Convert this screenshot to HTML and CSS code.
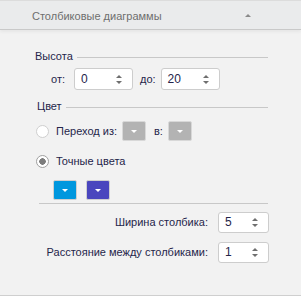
FILE: index.html
```html
<!DOCTYPE html>
<html lang="ru">
<head>
  <meta charset="UTF-8" />
  <title>Столбиковые диаграммы</title>
  <link rel="stylesheet" href="styles.css">
</head>
<body>
  <div class="panel">
    <!-- Header -->
    <div class="panel-header">
      <span class="panel-title">Столбиковые диаграммы</span>
      <span class="collapse-arrow"></span>
    </div>
    <div class="panel-body">
      <!-- Height -->
      <div class="group-title"><span>Высота</span><div class="group-line"></div></div>
      <div class="range-row">
        <span class="label">от:</span>
        <div class="spin"><span class="spin-value">0</span><span class="spin-arrows"><i class="up"></i><i class="down"></i></span></div>
        <span class="label">до:</span>
        <div class="spin"><span class="spin-value">20</span><span class="spin-arrows"><i class="up"></i><i class="down"></i></span></div>
      </div>
      <!-- Color -->
      <div class="group-title color-title"><span>Цвет</span><div class="group-line"></div></div>
      <div class="radio-row">
        <span class="radio"></span>
        <span class="label">Переход из:</span>
        <span class="color-btn gray"><i></i></span>
        <span class="label to">в:</span>
        <span class="color-btn gray"><i></i></span>
      </div>
      <div class="radio-row second">
        <span class="radio checked"></span>
        <span class="label">Точные цвета</span>
      </div>
      <div class="color-row">
        <span class="color-btn blue"><i></i></span>
        <span class="color-btn purple"><i></i></span>
      </div>
      <div class="separator"></div>
      <!-- Bar settings -->
      <div class="field-row">
        <span class="label">Ширина столбика:</span>
        <div class="spin small"><span class="spin-value">5</span><span class="spin-arrows"><i class="up"></i><i class="down"></i></span></div>
      </div>
      <div class="field-row">
        <span class="label">Расстояние между столбиками:</span>
        <div class="spin small"><span class="spin-value">1</span><span class="spin-arrows"><i class="up"></i><i class="down"></i></span></div>
      </div>
    </div>
  </div>
</body>
</html>
```
FILE: styles.css
```css
/* Global */
html, body {
  margin: 0;
  padding: 0;
  width: 301px;
  height: 296px;
  overflow: hidden;
  background: #f2f2f2;
  font-family: 'Liberation Sans', Arial, sans-serif;
  font-size: 11px;
  color: #25254a;
  white-space: nowrap;
}
.panel {
  height: 295px;
  border-bottom: 1px solid #cfcfcf;
}
/* Header */
.panel-header {
  height: 28px;
  background: #eaebec;
  border-top: 1px solid #dcdcdc;
  border-bottom: 1px solid #c9c9c9;
  box-shadow: 0 2px 3px rgba(0,0,0,0.05);
  display: flex;
  align-items: center;
  justify-content: space-between;
  padding: 0 50px 0 32px;
}
.panel-title {
  color: #6e6e6e;
  padding-top: 2px;
}
.collapse-arrow {
  width: 0;
  height: 0;
  border-left: 3px solid transparent;
  border-right: 3px solid transparent;
  border-bottom: 3px solid #8a8a8a;
}
/* Body */
.panel-body {
  padding: 19px 33px 0 35px;
}
.group-title {
  display: flex;
  align-items: center;
  height: 14px;
}
.group-line {
  flex: 1;
  height: 1px;
  background: #c8c8c8;
  margin-left: 4px;
  margin-top: 2px;
}
.color-title {
  margin-top: 9px;
  padding-left: 2px;
}
.range-row {
  display: flex;
  align-items: center;
  margin-top: 5px;
  padding-left: 16px;
  height: 22px;
}
.range-row .label {
  margin-right: 9px;
}
.range-row .spin + .label {
  margin-left: 7px;
  margin-right: 5px;
}
/* Spin box */
.spin {
  width: 59px;
  height: 22px;
  background: #fff;
  border: 1px solid #cdcdcd;
  border-radius: 3px;
  display: flex;
  align-items: center;
  justify-content: space-between;
  padding: 0 10px 0 6px;
  box-sizing: border-box;
  font-size: 12px;
}
.spin.small {
  width: 51px;
  height: 21px;
}
.spin-arrows {
  display: flex;
  flex-direction: column;
  gap: 3px;
}
.spin-arrows i {
  width: 0;
  height: 0;
  border-left: 3px solid transparent;
  border-right: 3px solid transparent;
}
.spin-arrows .up {
  border-bottom: 3px solid #6f6f6f;
}
.spin-arrows .down {
  border-top: 3px solid #6f6f6f;
}
/* Radios */
.radio-row {
  display: flex;
  align-items: center;
  margin-top: 8px;
  height: 20px;
  padding-left: 1px;
}
.radio-row.second {
  margin-top: 10px;
}
.radio {
  width: 11px;
  height: 11px;
  border: 1px solid #cfcfcf;
  border-radius: 50%;
  background: #fff;
  margin-right: 7px;
}
.radio.checked {
  border-color: #a0a0a0;
  background: radial-gradient(circle, #7c7c7c 0, #7c7c7c 3px, #fff 3.5px);
}
.radio-row .label {
  margin-right: 5px;
}
.radio-row .to {
  margin-left: 4px;
}
/* Colour buttons */
.color-btn {
  width: 22px;
  height: 18px;
  border: 1px solid #d8d8d8;
  border-radius: 2px;
  display: flex;
  align-items: center;
  justify-content: center;
  margin-right: 4px;
}
.color-btn i {
  width: 0;
  height: 0;
  border-left: 3px solid transparent;
  border-right: 3px solid transparent;
  border-top: 3px solid #fff;
}
.color-btn.gray { background: #b3b3b3; }
.color-btn.blue { background: #0097de; border-color: #cfcfcf; }
.color-btn.purple { background: #4a46be; border-color: #cfcfcf; }
.color-row {
  display: flex;
  gap: 9px;
  margin-top: 9px;
  padding-left: 18px;
}
.color-row .color-btn {
  margin-right: 0;
}
.separator {
  height: 1px;
  background: #c8c8c8;
  margin: 3px 0 0 4px;
}
/* Fields */
.field-row {
  display: flex;
  align-items: center;
  justify-content: flex-end;
  margin: 7px -1px 0 0;
  height: 22px;
}
.field-row + .field-row {
  margin-top: 8px;
}
.field-row .label {
  margin-right: 10px;
}
```
